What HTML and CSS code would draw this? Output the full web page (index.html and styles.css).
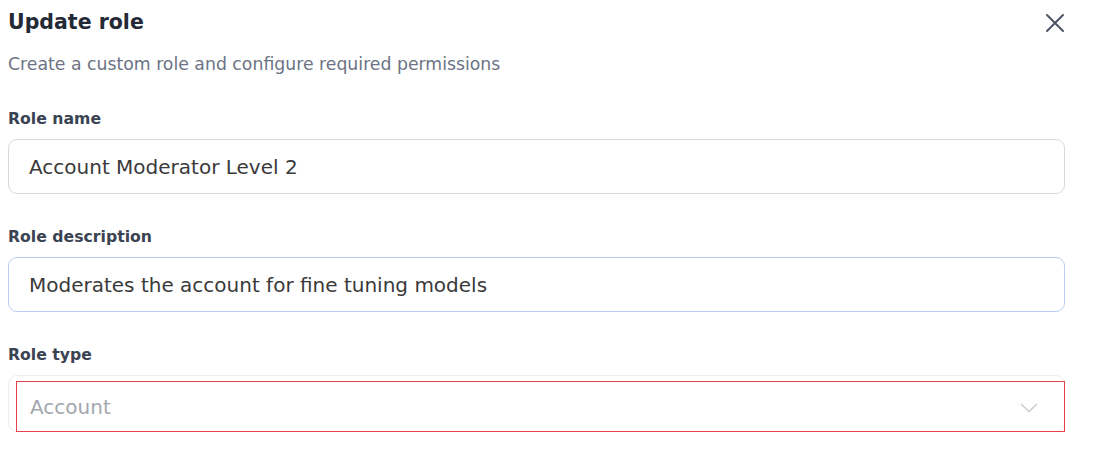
FILE: index.html
```html
<!DOCTYPE html>
<html lang="en">
<head>
<meta charset="utf-8">
<title>Update role</title>
<link rel="stylesheet" href="styles.css">
</head>
<body>
<div class="dialog">
  <div class="header">
    <h1 class="title">Update role</h1>
    <button class="close" aria-label="Close">
      <svg width="20" height="20" viewBox="0 0 20 20"><path d="M2 2 L18 18 M18 2 L2 18" stroke="#4b5563" stroke-width="2" stroke-linecap="round" fill="none"/></svg>
    </button>
  </div>
  <p class="subtitle">Create a custom role and configure required permissions</p>

  <label class="label first">Role name</label>
  <div class="input">Account Moderator Level 2</div>

  <label class="label">Role description</label>
  <div class="input focused">Moderates the account for fine tuning models</div>

  <label class="label">Role type</label>
  <div class="select">
    <div class="select-inner">
      <span class="placeholder">Account</span>
      <svg class="chevron" width="18" height="10" viewBox="0 0 18 10"><path d="M1 1 L9 8.5 L17 1" stroke="#c9ccd2" stroke-width="1.5" fill="none"/></svg>
    </div>
  </div>
</div>
</body>
</html>
```

FILE: styles.css
```css
* { box-sizing: border-box; }
body {
  margin: 0;
  background: #ffffff;
  font-family: "DejaVu Sans", "Noto Sans", sans-serif;
}
.dialog {
  padding: 8px 40px 0 8px;
}
.header {
  display: flex;
  justify-content: space-between;
  align-items: flex-start;
  height: 28px;
}
.title {
  margin: 0;
  font-size: 20.5px;
  line-height: 28px;
  font-weight: bold;
  color: #232a36;
}
.close {
  border: 0;
  background: none;
  padding: 0;
  margin: 5px 0 0 0;
  width: 20px;
  height: 20px;
  cursor: pointer;
}
.subtitle {
  margin: 18px 0 0 0;
  font-size: 17.3px;
  line-height: 20px;
  color: #6b7385;
}
.label {
  display: block;
  margin-top: 33px;
  font-size: 15.7px;
  line-height: 20px;
  font-weight: bold;
  color: #3a4352;
}
.label.first { margin-top: 35px; }
.input {
  margin-top: 10px;
  height: 55px;
  border: 1px solid #d6d9df;
  border-radius: 9px;
  padding: 0 20px;
  display: flex;
  align-items: center;
  font-size: 20px;
  color: #3a3a3a;
}
.input.focused {
  border-color: #bccff2;
}
.select {
  margin-top: 10px;
  height: 57px;
  border: 1px solid #eceef1;
  border-radius: 9px;
  padding: 5px 0 0 7px;
}
.select-inner {
  height: 51px;
  margin-right: -1px;
  margin-bottom: -1px;
  border: 1.5px solid #e6434d;
  display: flex;
  align-items: center;
  justify-content: space-between;
  padding: 0 26px 0 13px;
}
.placeholder {
  font-size: 20px;
  color: #a2a6ad;
}
.chevron { display: block; margin-top: 2px; }
```
